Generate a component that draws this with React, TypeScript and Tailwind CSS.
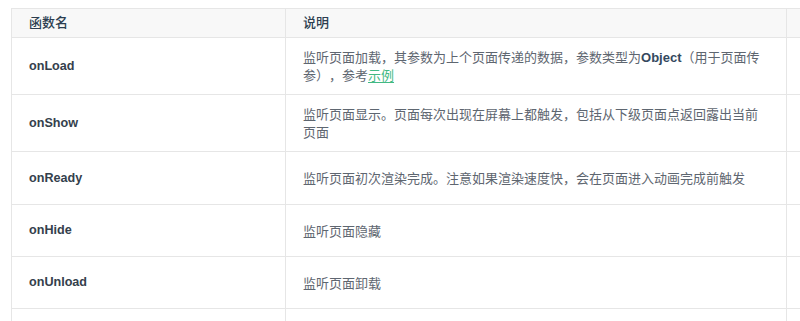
import React from "react";

const font = { fontFamily: '"Liberation Sans", "Noto Sans CJK SC", sans-serif' };

type Row = { name: string; h: string; desc: React.ReactNode };

const rows: Row[] = [
  {
    name: "onLoad",
    h: "h-[57px]",
    desc: (
      <>
        监听页面加载，其参数为上个页面传递的数据，参数类型为<span className="font-bold text-[#34495e]">Object</span>（用于页面传参），参考
        <span className="text-[#42b983] underline underline-offset-2">示例</span>
      </>
    ),
  },
  {
    name: "onShow",
    h: "h-[57px]",
    desc: "监听页面显示。页面每次出现在屏幕上都触发，包括从下级页面点返回露出当前页面",
  },
  {
    name: "onReady",
    h: "h-[53px]",
    desc: "监听页面初次渲染完成。注意如果渲染速度快，会在页面进入动画完成前触发",
  },
  { name: "onHide", h: "h-[52px]", desc: "监听页面隐藏" },
  { name: "onUnload", h: "h-[52px]", desc: "监听页面卸载" },
  { name: "", h: "h-[52px]", desc: "" },
];

export default function App() {
  return (
    <div className="w-[800px] h-[321px] overflow-hidden bg-white pt-[8px] pl-[11px] [text-spacing-trim:space-all]" style={font}>
      <div className="w-[1000px] border-l border-t border-[#e6e6e6]">
        <div className="flex h-[29px] border-b border-[#e6e6e6] bg-[#f8f8f8] text-[13px] font-medium text-[#2c3e50]">
          <div className="w-[274px] shrink-0 border-r border-[#e6e6e6] flex items-center pl-[17px]">函数名</div>
          <div className="w-[501px] shrink-0 border-r border-[#e6e6e6] flex items-center pl-[17px]">说明</div>
          <div className="flex-1" />
        </div>
        {rows.map((r, i) => (
          <div key={i} className={`flex ${r.h} border-b border-[#e6e6e6]`}>
            <div className="w-[274px] shrink-0 border-r border-[#e6e6e6] flex items-center pl-[17px] text-[12.6px] font-bold text-[#34404c]">
              {r.name}
            </div>
            <div className="w-[501px] shrink-0 border-r border-[#e6e6e6] flex items-center px-[17px] text-[13px] leading-[18px] text-[#5e6670]">
              <div className="pt-[2px]">{r.desc}</div>
            </div>
            <div className="flex-1" />
          </div>
        ))}
      </div>
    </div>
  );
}
